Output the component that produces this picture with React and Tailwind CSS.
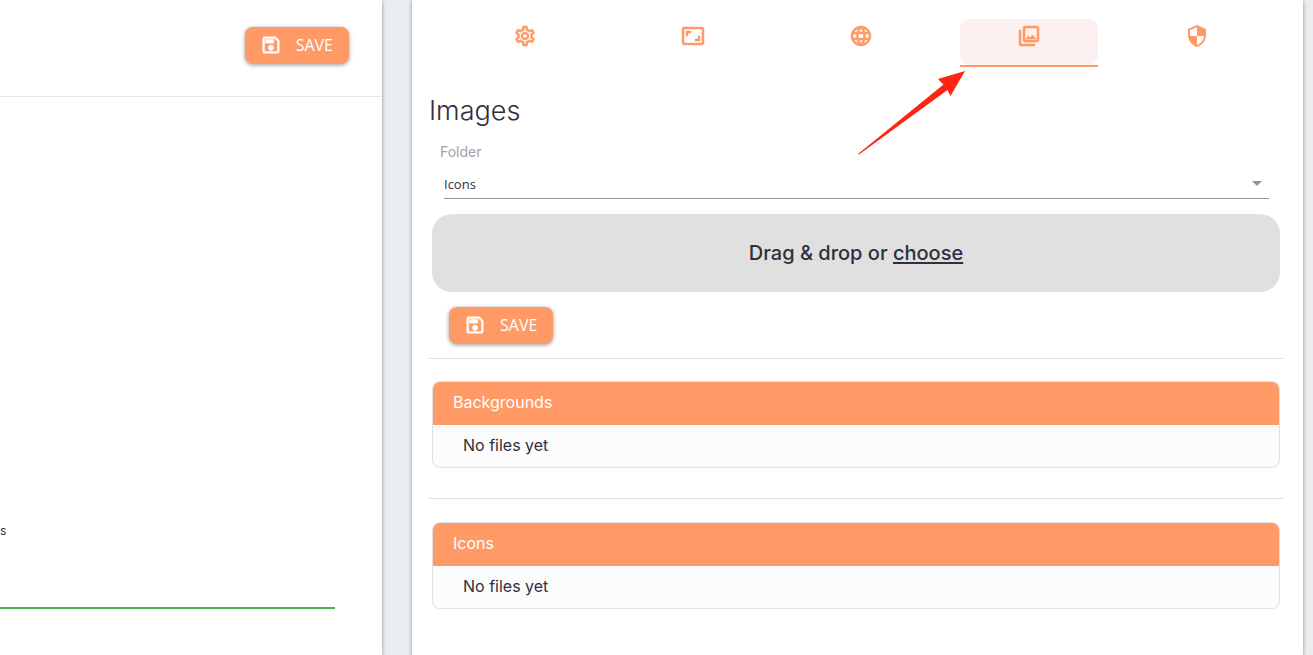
import React, { useState } from 'react'
import {
  MdAspectRatio,
  MdLanguage,
  MdOutlinePhotoLibrary,
  MdOutlineSave,
  MdOutlineSettings,
} from 'react-icons/md'

function ShieldIcon({ size = 24 }) {
  return (
    <svg width={size} height={size} viewBox="0 0 24 24" fill="currentColor" aria-hidden="true">
      <path d="M12,12H19C18.47,16.11 15.72,19.78 12,20.92V12H5V6.3L12,3.19M12,1L3,5V11C3,16.55 6.84,21.73 12,23C17.16,21.73 21,16.55 21,11V5L12,1Z" />
    </svg>
  )
}

// the icon set is a little thin, give the glyphs (not their empty bounding box) some weight
const heavier = '[&_path]:[stroke-width:0.5] [&_path[fill=none]]:stroke-none'

const tabs = [
  { id: 'settings', label: 'Settings', Icon: MdOutlineSettings },
  { id: 'size', label: 'Size', Icon: MdAspectRatio },
  { id: 'language', label: 'Language', Icon: MdLanguage },
  { id: 'images', label: 'Images', Icon: MdOutlinePhotoLibrary },
  { id: 'security', label: 'Security', Icon: ShieldIcon },
]

const folders = ['Backgrounds', 'Icons']

function SaveButton() {
  return (
    <button
      type="button"
      className="flex h-[37px] items-center gap-[14px] rounded-lg bg-[#ff9a66] pr-4 pb-px pl-[15px] font-['Open_Sans',sans-serif] text-base leading-5 text-white shadow-[0_1px_4px_rgba(0,0,0,0.4)]"
    >
      <MdOutlineSave size={22} className={heavier} />
      SAVE
    </button>
  )
}

function Tab({ tab, active, onSelect }) {
  const { Icon, label } = tab
  return (
    <button type="button" role="tab" aria-selected={active} aria-label={label} onClick={onSelect} className="relative">
      <span className={`flex h-[46px] justify-center rounded-[10px] pt-[5px] text-[#ff9a66] ${heavier} ${active ? 'bg-[#fcf0f0]' : ''}`}>
        <Icon size={24} />
      </span>
      <span className={`block h-0.5 ${active ? 'bg-[#ff9a66]' : ''}`} />
      {active && (
        <svg
          className="pointer-events-none absolute top-[52px] left-[-102px]"
          width="108"
          height="84"
          viewBox="0 0 108 84"
          aria-hidden="true"
        >
          <path d="M107 0 L80 8 L85.500 13.500 L0 83 L1 83.500 L89.500 19 L92.500 25 Z" fill="#ff2314" />
        </svg>
      )}
    </button>
  )
}

function FolderCard({ title }) {
  return (
    <section className="mr-1 ml-[3px] overflow-hidden rounded-lg border border-[#e0e0e0] bg-[#fcfcfc] text-base">
      <h3 className="bg-[#ff9a66] px-5 pt-[9px] pb-[11px] leading-[23px] text-white">{title}</h3>
      <p className="px-[30px] pt-2 pb-[10px] leading-6">No files yet</p>
    </section>
  )
}

export default function App() {
  const [current, setCurrent] = useState('images')
  const [folder, setFolder] = useState('Icons')

  return (
    <div className="flex min-h-screen gap-[30px] bg-[#e9edf0] pr-[10px] font-[Inter,sans-serif] text-[#2f2f3e]">
      <aside className="w-[382px] shrink-0 bg-white shadow-[0_1px_4px_rgba(0,0,0,0.4)]">
        <div className="flex justify-end border-b border-[#e6e6e6] pt-[27px] pr-[33px] pb-8">
          <SaveButton />
        </div>
        <div className="pt-[422px] pr-[47px]">
          <label htmlFor="value" className="block text-xs leading-6">s</label>
          <input id="value" className="mt-8 block h-[34px] w-full border-b-2 border-[#4caf50] outline-none" />
        </div>
      </aside>

      <main className="min-w-0 flex-1 bg-white pr-[19px] pl-[17px] shadow-[0_1px_4px_rgba(0,0,0,0.4)]">
        <div role="tablist" className="grid grid-cols-5 gap-[30px] pt-[19px] pr-[18px] pl-[27px]">
          {tabs.map((t) => (
            <Tab key={t.id} tab={t} active={t.id === current} onSelect={() => setCurrent(t.id)} />
          ))}
        </div>

        <h2 className="mt-7 text-[27px] leading-8 font-light">Images</h2>

        <div className="pt-4 pr-[15px] pl-[11px]">
          <label htmlFor="folder" className="block text-sm leading-[18px] text-[#a2a2a2]">Folder</label>
          <div className="relative mt-2 ml-1">
            <select
              id="folder"
              value={folder}
              onChange={(e) => setFolder(e.target.value)}
              className="h-[30px] w-full appearance-none border-b border-[#949494] pt-0.5 font-['Open_Sans',sans-serif] text-[13px] outline-none"
            >
              {folders.map((f) => (
                <option key={f}>{f}</option>
              ))}
            </select>
            <svg className="pointer-events-none absolute top-3 right-[7px]" width="10" height="5" viewBox="0 0 10 5" aria-hidden="true">
              <path d="M0 0h10L5 5z" fill="#949494" />
            </svg>
          </div>
        </div>

        <div className="mr-1 ml-[3px] mt-[15px] flex h-[78px] items-center justify-center rounded-[20px] bg-[#e0e0e0] text-xl font-medium">
          <p>
            Drag &amp; drop or <button type="button" className="underline underline-offset-2">choose</button>
          </p>
        </div>

        <div className="flex pt-[15px] pb-[14px] pl-5">
          <SaveButton />
        </div>

        <hr className="mb-[22px] border-[#e0e0e0]" />
        <FolderCard title="Backgrounds" />
        <hr className="mt-[30px] mb-[23px] border-[#e0e0e0]" />
        <FolderCard title="Icons" />
      </main>
    </div>
  )
}
